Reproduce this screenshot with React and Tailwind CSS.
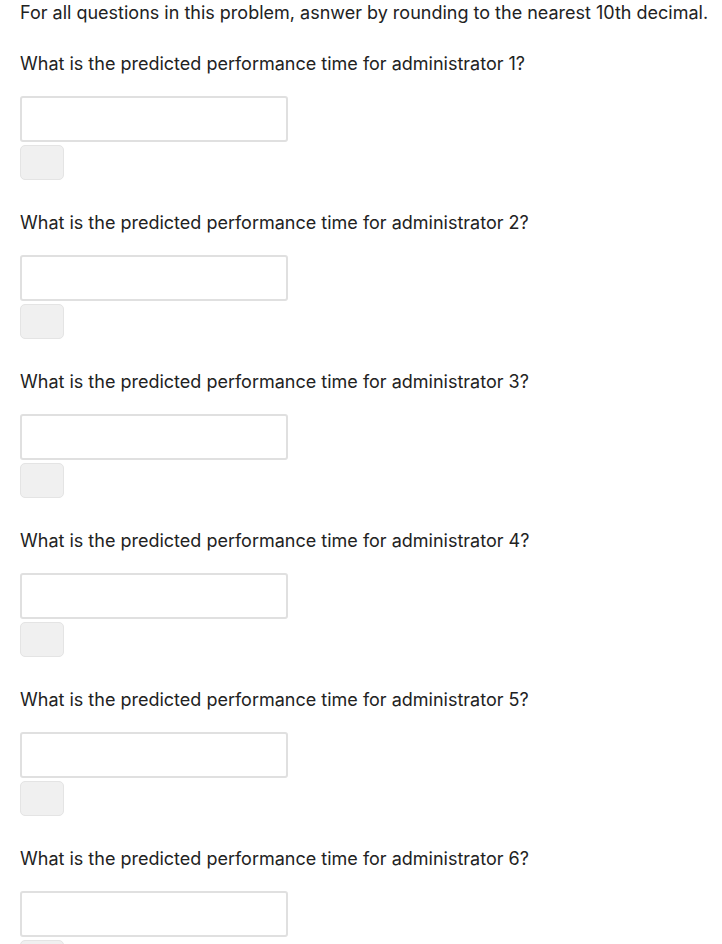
export default function App() {
  const items = [1, 2, 3, 4, 5, 6];
  return (
    <div className="bg-white min-h-[944px] pl-[20px] pt-[1px] text-[#222222]" style={{ fontFamily: "Inter, 'Noto Sans', sans-serif" }}>
      <p className="text-[18px] leading-[24px] m-0 whitespace-nowrap">
        For all questions in this problem, asnwer by rounding to the nearest 10th decimal.
      </p>
      <div className="flex flex-col">
        {items.map((n) => (
          <div key={n} className="flex flex-col mt-[31px] first:mt-[27px]">
            <p className="text-[18px] leading-[24px] m-0">
              What is the predicted performance time for administrator {n}?
            </p>
            <input
              type="text"
              className="mt-[20px] w-[268px] h-[46px] border-2 border-[#e0e0e0] rounded-[3px] bg-white outline-none"
            />
            <button className="mt-[3px] w-[44px] h-[35px] bg-[#f0f0f0] border border-[#e4e4e4] rounded-[5px]"></button>
          </div>
        ))}
      </div>
    </div>
  );
}
